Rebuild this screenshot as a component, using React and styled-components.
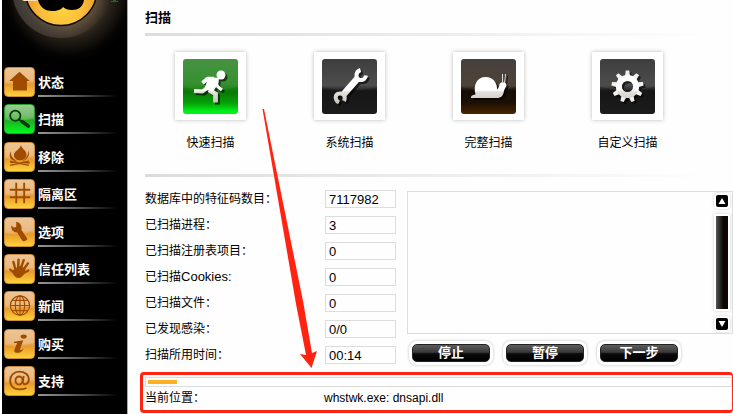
import React, { useState } from "react";
import styled, { createGlobalStyle } from "styled-components";

const GEAR_TEETH = [0, 40, 80, 120, 160, 200, 240, 280, 320];

const HouseGlyph = () => (
  <path d="M15 4L26 14H23V24H8V14H4Z" fill="currentColor" />
);

const SearchGlyph = () => (
  <g fill="none" stroke="currentColor" strokeLinecap="round">
    <circle cx="10.5" cy="11.5" r="5.5" strokeWidth="2" />
    <path d="M14.5 15.5L18 18" strokeWidth="2" />
    <path d="M18 18L24.5 22.5" strokeWidth="4" />
  </g>
);

const FireGlyph = () => (
  <g fill="currentColor">
    <path d="M16.5 2C17 6 22.5 8 22.5 12.5C22.5 16 19 18.5 15.5 18.5C12 18.5 9 16 9 13C9 9 16 7 16.5 2Z" />
    <path d="M6 9C5 13 8 17 12.5 19.5C8 19.5 4.5 17 4.5 13.5C4.5 11.5 5 10 6 9Z" />
    <path d="M24.5 8C26.5 12 24 18 18 19.5C22 17 24.5 13 24.5 8Z" />
    <path
      d="M5 19.5L25 24M25 19.5L5 24M5 21L12 20.5M18 20.5L26 21.5"
      fill="none"
      stroke="currentColor"
      strokeWidth="1.5"
    />
  </g>
);

const GridGlyph = () => (
  <path
    d="M11.5 3V25M20 3V25M4.5 10.5H26.5M4.5 18.5H26.5"
    fill="none"
    stroke="currentColor"
    strokeWidth="2"
  />
);

const ToolGlyph = () => (
  <path
    d="M11.5 4V9.5L9 10.5L6.5 8C5.5 12 8 15.5 12.5 15.5L18 24.5C19 25.5 22.5 24.5 23.5 22.5L17 12.5C18 8.5 15.5 4.5 11.5 4Z"
    fill="currentColor"
  />
);

const HandGlyph = () => (
  <g fill="none" stroke="currentColor" strokeLinecap="round">
    <path
      d="M10 15L16 12L21 15L19 21C17 25 12 25 9.5 22L8 18Z"
      fill="currentColor"
      strokeWidth="1"
    />
    <path
      d="M10.5 15L8.5 7.5M13.5 14L14 5M16.5 14L19.5 5.5M19 16L24 9"
      strokeWidth="2.6"
    />
    <path d="M10 20L5 15.5M18 20L24.5 16.5" strokeWidth="2.4" />
  </g>
);

const GlobeGlyph = () => (
  <g fill="none" stroke="currentColor" strokeWidth="1.2">
    <circle cx="15.5" cy="14.5" r="10.3" />
    <ellipse cx="15.5" cy="14.5" rx="5" ry="10.3" />
    <path d="M15.5 4V25M5 14.5H26M7 9H24M7 20H24" />
  </g>
);

const InfoGlyph = () => (
  <g fill="currentColor">
    <ellipse cx="19.5" cy="7" rx="3.3" ry="2.3" />
    <path d="M9 12.5L19 11L15.5 20.5C15.5 22 17.5 21.5 19.5 19.5C18.5 23 15.5 24.5 12.5 24.5C9 24.5 9 22 10 20L12.5 14H9Z" />
  </g>
);

const AtGlyph = () => (
  <g fill="none" stroke="currentColor" strokeWidth="2">
    <ellipse cx="14.5" cy="14.5" rx="3.8" ry="4.3" />
    <path d="M19.5 9.5L18.5 16C18.5 20 25 19 25 13.5C25 8 20.5 5 15 5C9 5 5 9 5 14.5C5 20.5 9 24 15 24C18 24 20.5 23.5 22.5 22.5" />
  </g>
);

const RunnerGlyph = () => (
  <g stroke="url(#glyphFill)" fill="none" strokeWidth="4">
    <circle cx="38" cy="16" r="4.5" fill="#fff" stroke="none" />
    <path d="M19.5 24L24.5 19.8H31" strokeLinejoin="round" />
    <path d="M26 18L36 19L35.5 24L30 33L21 30Z" fill="#fff" stroke="none" />
    <path d="M25 28.5L19.5 32.5L11 32" strokeLinejoin="round" />
    <path d="M26 31L32.5 35V43.5" strokeWidth="4.8" />
    <path d="M32 22L35 28L39 31" strokeWidth="3" />
  </g>
);

const WrenchGlyph = () => (
  <g stroke="url(#glyphFill)" fill="none" strokeWidth="4">
    <path d="M21 36L35.5 19.5" strokeWidth="6.5" />
    <path d="M38.5 11C33 13 33.5 20 38 21C41 21.5 43.5 19.5 44 16.5" />
    <path d="M17 43.5C12.5 41 12.5 35 17.5 34.5C21.5 34 24 38 22 42" />
  </g>
);

const SnailGlyph = () => (
  <g fill="url(#glyphFill)">
    <path d="M10 39C9.5 37 11 36 14.5 35.5C12 26 16 18 24.5 18C33 18 36.5 25 36 30.5C38 29 38 27 38.5 25.5C39 22.5 45 22.5 45.5 26C45.5 28 43.5 29.5 43 32C42 37 40 39 36 39Z" />
    <path d="M41.5 24V15M43.5 24L44.5 15" stroke="#ddd" strokeWidth="1" />
  </g>
);

const GearGlyph = () => (
  <g>
    {GEAR_TEETH.map((angle) => (
      <path
        key={angle}
        d="M25 17L25.8 11.5H29.2L30 17Z"
        fill="#f2f0ee"
        transform={`rotate(${angle} 27.5 27.5)`}
      />
    ))}
    <circle
      cx="27.5"
      cy="27.5"
      r="8.6"
      fill="none"
      stroke="url(#glyphFill)"
      strokeWidth="6"
    />
  </g>
);

const MENU = [
  { name: "状态", Glyph: HouseGlyph },
  { name: "扫描", Glyph: SearchGlyph },
  { name: "移除", Glyph: FireGlyph },
  { name: "隔离区", Glyph: GridGlyph },
  { name: "选项", Glyph: ToolGlyph },
  { name: "信任列表", Glyph: HandGlyph },
  { name: "新闻", Glyph: GlobeGlyph },
  { name: "购买", Glyph: InfoGlyph },
  { name: "支持", Glyph: AtGlyph },
];

const MODES = [
  { name: "快速扫描", Glyph: RunnerGlyph, tone: "green" },
  { name: "系统扫描", Glyph: WrenchGlyph, tone: "black" },
  { name: "完整扫描", Glyph: SnailGlyph, tone: "brown" },
  { name: "自定义扫描", Glyph: GearGlyph, tone: "black" },
];

const STATS = [
  { id: "signatures", label: "数据库中的特征码数目：", value: "7117982" },
  { id: "processes", label: "已扫描进程：", value: "3" },
  { id: "registry", label: "已扫描注册表项目：", value: "0" },
  { id: "cookies", label: "已扫描", latin: "Cookies:", value: "0" },
  { id: "files", label: "已扫描文件：", value: "0" },
  { id: "infections", label: "已发现感染：", value: "0/0" },
  { id: "time", label: "扫描所用时间：", value: "00:14" },
];

const TONES = {
  green: "linear-gradient(#3c8c38, #2a8a22 45%, #0a7806 60%, #06a006 80%, #00f018 95%)",
  black: "linear-gradient(#333, #424242 48%, #161616 58%, #1c1c1c)",
  brown: "linear-gradient(#3a3531, #45382b 48%, #140d06 58%, #1c0f03 80%, #4a2600)",
};

const Logo = () => (
  <LogoArt viewBox="0 0 125 67" aria-hidden="true">
    <defs>
      <radialGradient id="halo" gradientUnits="userSpaceOnUse" cx="66" cy="-6" r="68">
        <stop offset="0.4" stopColor="#5e4f3a" />
        <stop offset="0.65" stopColor="#262019" />
        <stop offset="0.9" stopColor="#050403" />
        <stop offset="1" stopColor="#000" />
      </radialGradient>
      <radialGradient id="face" gradientUnits="userSpaceOnUse" cx="60" cy="8" r="40">
        <stop offset="0" stopColor="#ffd23e" />
        <stop offset="0.5" stopColor="#fbbf3a" />
        <stop offset="1" stopColor="#e8922c" />
      </radialGradient>
      <linearGradient id="ring" x1="0" x2="1">
        <stop offset="0" stopColor="#8a857e" stopOpacity="0.35" />
        <stop offset="0.6" stopColor="#887a66" stopOpacity="0.25" />
        <stop offset="1" stopColor="#6b5a42" stopOpacity="0" />
      </linearGradient>
      <linearGradient
        id="glyphFill"
        gradientUnits="userSpaceOnUse"
        x1="0"
        y1="12"
        x2="0"
        y2="44"
      >
        <stop offset="0.6" stopColor="#fff" />
        <stop offset="0.65" stopColor="#e4e0dc" />
        <stop offset="1" stopColor="#cdc6be" />
      </linearGradient>
    </defs>
    <rect width="125" height="67" fill="url(#halo)" />
    <circle cx="59" cy="-11" r="49" fill="url(#ring)" />
    <circle cx="59" cy="-10.5" r="36" fill="url(#face)" stroke="#0c0904" strokeWidth="1.5" />
    <path d="M36 0C38 8 44 11 50 11C56 11 60 9 61 7C63 9 66 10 70 10C76 10 81 7 82 0Z" fill="#000" />
    <path d="M20 0H36L34 1H22Z" fill="#ffe0b8" />
    <path d="M111 0H114V1H116V2H109V1H111Z" fill="#1b6d1b" />
  </LogoArt>
);

const App = () => {
  const [mode, setMode] = useState("快速扫描");

  return (
    <>
      <GlobalStyle />
      <Window>
        <Sidebar>
          <Logo />
          <Menu>
            {MENU.map(({ name, Glyph }) => (
              <MenuLink key={name} href="#">
                <MenuIcon viewBox="0 0 30 30" $active={name === "扫描"}>
                  <path d="M0 0H30V13Q15 20 0 16Z" fill="#fff" opacity="0.12" />
                  <Glyph />
                </MenuIcon>
                <MenuName>{name}</MenuName>
              </MenuLink>
            ))}
          </Menu>
        </Sidebar>

        <Main>
          <Title>扫描</Title>
          <Rule />
          <Modes>
            {MODES.map(({ name, Glyph, tone }) => (
              <ModeButton
                key={name}
                type="button"
                aria-pressed={mode === name}
                onClick={() => setMode(name)}
              >
                <ModeFrame>
                  <ModeIcon viewBox="0 0 55 55" $tone={tone}>
                    <path d="M0 0H55V28Q27 35 0 28Z" fill="#fff" opacity="0.06" />
                    <ModeGlyph>
                      <Glyph />
                    </ModeGlyph>
                  </ModeIcon>
                </ModeFrame>
                {name}
              </ModeButton>
            ))}
          </Modes>
          <Rule />

          <Details>
            <Stats>
              {STATS.map(({ id, label, latin, value }) => (
                <StatRow key={id}>
                  <StatLabel htmlFor={id}>
                    {label}
                    {latin && <Latin>{latin}</Latin>}
                  </StatLabel>
                  <StatValue id={id} value={value} readOnly />
                </StatRow>
              ))}
            </Stats>
            <Results>
              <ResultBox>
                <ResultList aria-label="扫描结果" readOnly />
                <ScrollBar>
                  <ScrollButton type="button" aria-label="向上">
                    <svg viewBox="0 0 12 12">
                      <path d="M6 3L9.5 9H2.5Z" fill="#fff" />
                    </svg>
                  </ScrollButton>
                  <ScrollThumb />
                  <ScrollButton type="button" aria-label="向下">
                    <svg viewBox="0 0 12 12">
                      <path d="M6 9L9.5 3H2.5Z" fill="#fff" />
                    </svg>
                  </ScrollButton>
                </ScrollBar>
              </ResultBox>
              <Actions>
                <ActionButton type="button">停止</ActionButton>
                <ActionButton type="button">暂停</ActionButton>
                <ActionButton type="button">下一步</ActionButton>
              </Actions>
            </Results>
          </Details>

          <Highlight>
            <Progress role="progressbar" aria-label="扫描进度" aria-valuenow={5}>
              <ProgressFill style={{ width: "5%" }} />
            </Progress>
            <Location>
              <LocationLabel>当前位置：</LocationLabel>
              <span>whstwk.exe: dnsapi.dll</span>
            </Location>
          </Highlight>
        </Main>

        <Arrow viewBox="0 0 60 260" aria-hidden="true">
          <path
            d="M2.5 0L4 0L43 192L52 244L57 242L51.5 259L40 245L46 246L36 195Z"
            fill="#ff2412"
          />
        </Arrow>
      </Window>
    </>
  );
};

const GlobalStyle = createGlobalStyle`
  * {
    box-sizing: border-box;
  }

  body {
    margin: 0;
    background: #fefefe;
    color: #000;
    font-family: "Liberation Sans", "Noto Sans CJK SC", sans-serif;
    font-size: 12px;
    line-height: 16px;
  }

  button,
  input,
  textarea {
    font: inherit;
    color: inherit;
  }
`;

const Window = styled.div`
  position: relative;
  display: flex;
  min-height: 100vh;
  padding-left: 2px;
`;

const Sidebar = styled.aside`
  flex: 0 0 126px;
  display: flex;
  flex-direction: column;
  background: #000;
  border-right: 1px solid #aaa;
`;

const LogoArt = styled.svg`
  display: block;
  width: 100%;
  height: 67px;
`;

const Menu = styled.nav`
  flex: 1;
  display: flex;
  flex-direction: column;
  justify-content: space-between;
  padding: 0 10px 18px 2px;
`;

const MenuLink = styled.a`
  display: flex;
  align-items: stretch;
  gap: 3px;
  color: #fff;
  font-size: 13px;
  font-weight: bold;
  text-decoration: none;
`;

const MenuIcon = styled.svg`
  flex: none;
  width: 31px;
  height: 30px;
  border: 1px solid ${({ $active }) => ($active ? "#2c9a2c" : "#c98a3c")};
  border-radius: 4px;
  color: ${({ $active }) => ($active ? "#063d10" : "#a04c00")};
  background: ${({ $active }) =>
    $active
      ? "linear-gradient(#8cc684, #5cb350 45%, #1fae1f 55%, #00fb20)"
      : "linear-gradient(#ecbd85, #e8b070 45%, #e79a2c 58%, #ffd03a)"};
`;

const MenuName = styled.span`
  flex: 1;
  padding-top: 8px;
  border-bottom: 2px solid;
  border-image: linear-gradient(to right, #999, #555 50%, #000) 1;
`;

const Main = styled.main`
  flex: 1;
  min-width: 0;
  padding: 10px 0 1px 12px;
`;

const Title = styled.h1`
  margin: 0 0 7px 5px;
  font-size: 13px;
  line-height: 16px;
`;

const Rule = styled.hr`
  height: 3px;
  margin: 0 24px 0 5px;
  border: 0;
  background: linear-gradient(to right, #dcdcdc, #ececec 50%, #fefefe);
`;

const Modes = styled.div`
  display: grid;
  grid-template-columns: repeat(4, 1fr);
  margin: 16px 36px 23px 1px;
`;

const ModeButton = styled.button`
  display: flex;
  flex-direction: column;
  align-items: center;
  gap: 15px;
  padding: 0;
  border: 0;
  background: none;
  line-height: 16px;
  cursor: pointer;
`;

const ModeFrame = styled.span`
  display: block;
  padding: 7px 8px 6px;
  background: #fff;
  box-shadow: 0 0 4px #bbb;
`;

const ModeIcon = styled.svg`
  display: block;
  width: 55px;
  height: 55px;
  border-radius: 3px;
  background: ${({ $tone }) => TONES[$tone]};
`;

const ModeGlyph = styled.g`
  filter: drop-shadow(2px 2px 0 rgba(0, 0, 0, 0.6));
`;

const Details = styled.div`
  display: flex;
  gap: 11px;
  margin: 13px 0 0 5px;
`;

const Stats = styled.div`
  display: flex;
  flex-direction: column;
  gap: 8px;
`;

const StatRow = styled.div`
  display: flex;
  align-items: center;
  height: 18px;
`;

const StatLabel = styled.label`
  width: 180px;
`;

const Latin = styled.span`
  font-size: 13px;
`;

const StatValue = styled.input`
  width: 71px;
  height: 18px;
  padding: 0 3px;
  border: 1px solid #ddd;
  background: #fefefe;
  font-size: 13px;
`;

const Results = styled.div`
  flex: 1;
  min-width: 0;
  display: flex;
  flex-direction: column;
  gap: 10px;
`;

const ResultBox = styled.div`
  display: flex;
  flex: 1;
  margin-top: 1px;
  border: 1px solid #ddd;
`;

const ResultList = styled.textarea`
  flex: 1;
  min-width: 0;
  border: 0;
  background: none;
  resize: none;
  outline: none;
`;

const ScrollBar = styled.div`
  display: flex;
  flex-direction: column;
  gap: 9px;
  padding: 3px 4px;
`;

const ScrollButton = styled.button`
  width: 12px;
  height: 12px;
  padding: 0;
  border: 0;
  border-radius: 2px;
  background: #000;
  box-shadow: 0 0 0 2px #fff, 0 0 3px 2px #ccc;

  svg {
    display: block;
  }
`;

const ScrollThumb = styled.div`
  flex: 1;
  background: linear-gradient(to right, #555, #0c0804 60%, #140400);
  box-shadow: 0 0 0 2px #fff, 0 0 3px 2px #ccc;
`;

const Actions = styled.div`
  display: flex;
  gap: 16px;
  padding: 0 0 2px 5px;
`;

const ActionButton = styled.button`
  width: 78px;
  height: 18px;
  padding: 0;
  border: 1px solid #222;
  border-radius: 5px;
  background: linear-gradient(#5c5c5c, #3a3a3a 45%, #0a0a0a 55%, #000);
  box-shadow: 0 0 0 3px #fff, 0 0 3px 3px #bbb;
  color: #fff;
  font-size: 13px;
  font-weight: bold;
  line-height: 16px;
  cursor: pointer;
`;

const Highlight = styled.section`
  margin-top: 8px;
  padding: 2px 0 4px 2px;
  border: 3px solid #ff2412;
  border-right-width: 1px;
  border-radius: 4px;
`;

const Progress = styled.div`
  height: 10px;
  padding: 2px;
  border: 1px solid #ddd;
`;

const ProgressFill = styled.div`
  height: 4px;
  background: #ffb020;
`;

const Location = styled.div`
  display: flex;
  margin-top: 3px;
`;

const LocationLabel = styled.span`
  width: 179px;
`;

/* pointer that lies over the page, from the scan modes to the progress box */
const Arrow = styled.svg`
  position: absolute;
  top: 109px;
  left: 260px;
  width: 60px;
  height: 260px;
  pointer-events: none;
`;

export default App;
